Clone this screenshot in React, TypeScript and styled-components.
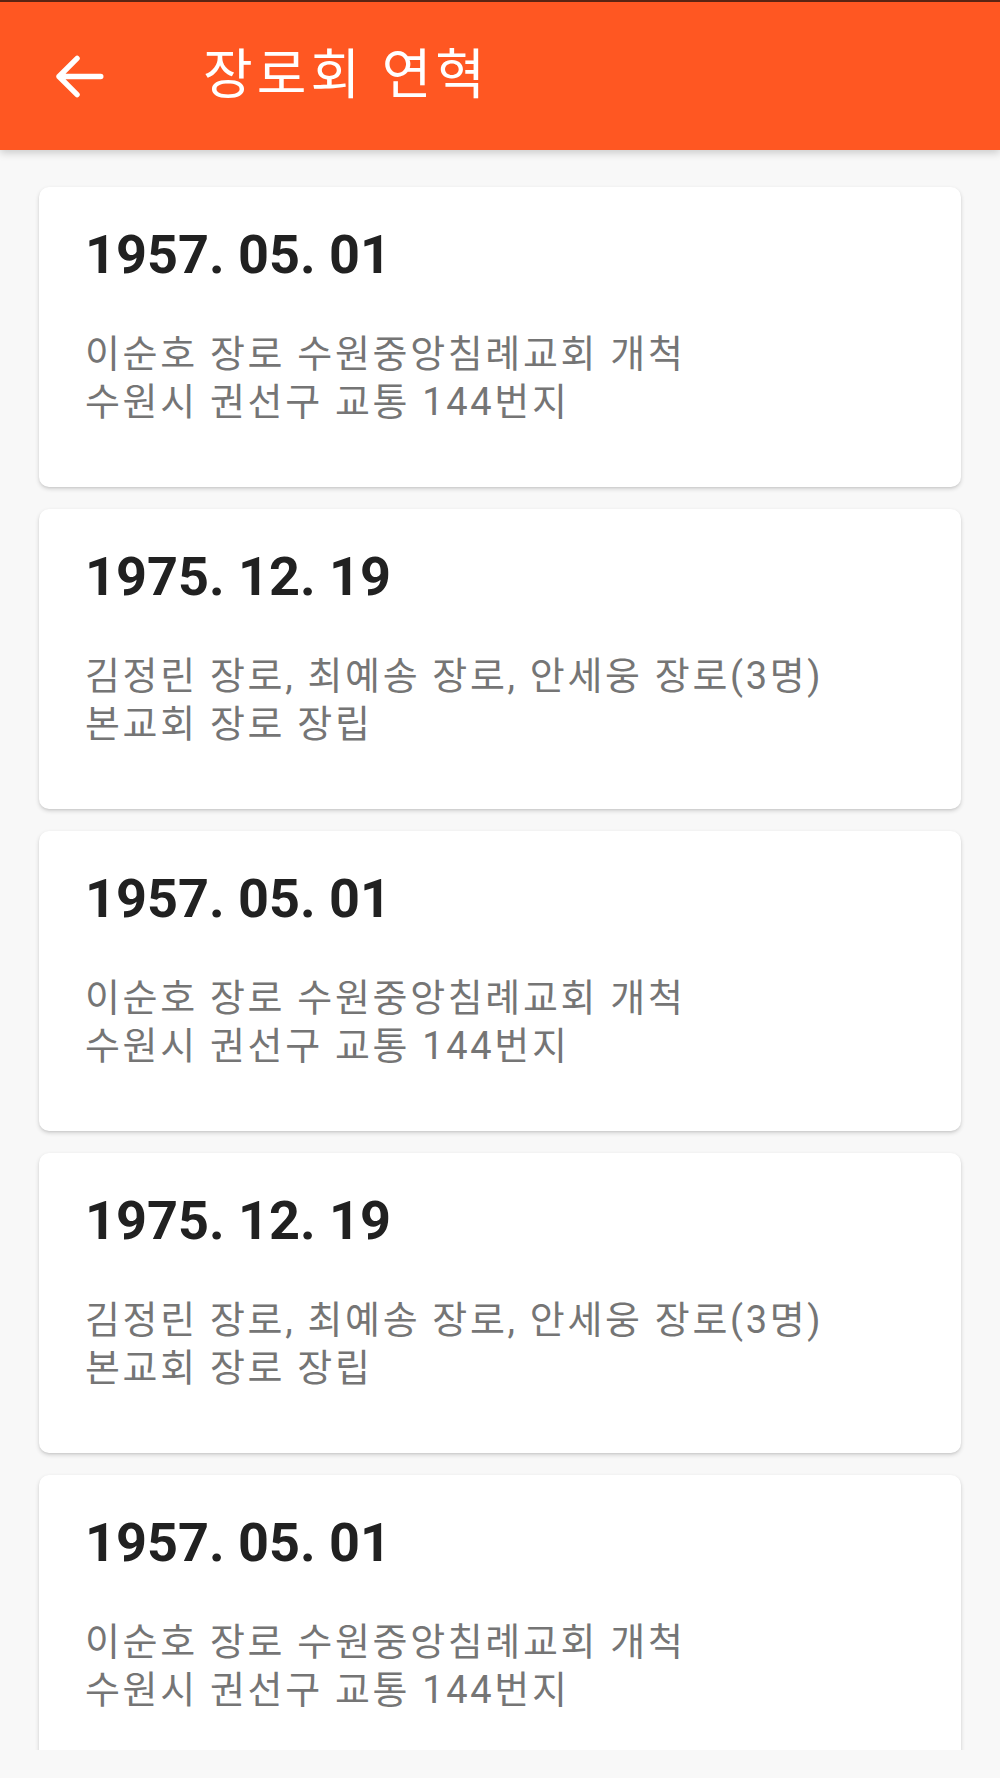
import React from 'react'
import styled, { createGlobalStyle } from 'styled-components'

const GlobalStyle = createGlobalStyle`
  html, body {
    margin: 0;
    padding: 0;
    background: #f8f8f8;
  }
  body {
    font-family: Roboto, "Noto Sans CJK KR", sans-serif;
  }
`

const entries = [
  { date: '1957. 05. 01', lines: ['이순호 장로 수원중앙침례교회 개척', '수원시 권선구 교통 144번지'] },
  { date: '1975. 12. 19', lines: ['김정린 장로, 최예송 장로, 안세웅 장로(3명)', '본교회 장로 장립'] },
  { date: '1957. 05. 01', lines: ['이순호 장로 수원중앙침례교회 개척', '수원시 권선구 교통 144번지'] },
  { date: '1975. 12. 19', lines: ['김정린 장로, 최예송 장로, 안세웅 장로(3명)', '본교회 장로 장립'] },
  { date: '1957. 05. 01', lines: ['이순호 장로 수원중앙침례교회 개척', '수원시 권선구 교통 144번지'] }
]

const History = () => {
  return (
    <Screen>
      <GlobalStyle />
      <Toolbar>
        <BackButton aria-label='back'>
          <svg width='67' height='67' viewBox='0 0 24 24'>
            <path
              d='M20 12H5M11.5 5.5L5 12l6.5 6.5'
              fill='none'
              stroke='#fff'
              strokeWidth='1.9'
              strokeLinecap='round'
              strokeLinejoin='round'
            />
          </svg>
        </BackButton>
        <Title>장로회 연혁</Title>
      </Toolbar>
      <List>
        {entries.map((item, i) => (
          <Card key={i}>
            <DateText>{item.date}</DateText>
            <Body>
              {item.lines.map((line, j) => (
                <Line key={j}>{line}</Line>
              ))}
            </Body>
          </Card>
        ))}
      </List>
    </Screen>
  )
}

const Screen = styled.div`
  width: 1000px;
  height: 1778px;
  overflow: hidden;
  display: flex;
  flex-direction: column;
  background: #f8f8f8;
`

const Toolbar = styled.header`
  flex: 0 0 auto;
  height: 148px;
  border-top: 2px solid #5a2413;
  background: #ff5722;
  display: flex;
  align-items: center;
  padding-left: 45px;
  box-shadow: 0 3px 8px rgba(0, 0, 0, 0.18);
  position: relative;
  z-index: 2;
`

const BackButton = styled.div`
  width: 67px;
  height: 67px;
  display: flex;
  align-items: center;
  justify-content: center;
`

const Title = styled.h1`
  margin: 0 0 0 91px;
  font-family: Roboto, "Noto Sans CJK KR", sans-serif;
  font-size: 54px;
  font-weight: 400;
  letter-spacing: 0.075em;
  color: #fff;
  line-height: 1;
`

const List = styled.main`
  flex: 0 0 auto;
  height: 1600px;
  box-sizing: border-box;
  overflow: hidden;
  padding: 37px 39px 0;
  display: flex;
  flex-direction: column;
  gap: 22px;
`

const Card = styled.section`
  flex: 0 0 auto;
  height: 300px;
  box-sizing: border-box;
  background: #fff;
  border-radius: 10px;
  padding: 36px 46px 0;
  box-shadow: 0 2px 4px rgba(0, 0, 0, 0.16), 0 1px 2px rgba(0, 0, 0, 0.06);
`

const DateText = styled.div`
  font-family: Roboto, "Noto Sans CJK KR", sans-serif;
  font-size: 54px;
  font-weight: 700;
  line-height: 64px;
  color: #212121;
`

const Body = styled.div`
  margin-top: 43px;
  color: #757575;
  font-size: 38px;
  line-height: 48px;
  letter-spacing: 0.07em;
`

const Line = styled.div`
  white-space: nowrap;
`

export default History
